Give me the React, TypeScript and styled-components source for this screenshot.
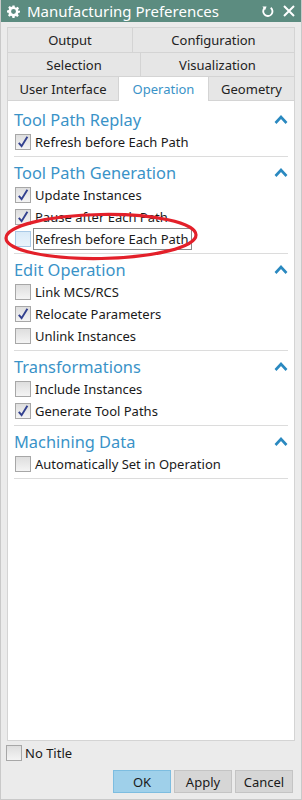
import React from 'react'
import styled, { createGlobalStyle } from 'styled-components'

const GlobalStyle = createGlobalStyle`
  html, body {
    margin: 0;
    padding: 0;
    background: #ebebeb;
  }
  * {
    box-sizing: border-box;
  }
`

const Window = styled.div`
  width: 302px;
  height: 800px;
  display: flex;
  flex-direction: column;
  background: #ebebeb;
  font-family: 'Noto Sans', 'Open Sans', sans-serif;
  color: #1a1a1a;
  border: 1px solid #c9c9c9;
  border-top: none;
  overflow: hidden;
`

const TitleBar = styled.div`
  height: 22px;
  flex: none;
  display: flex;
  align-items: center;
  background: #5c8c80;
  color: #fff;
  padding: 0 7px 0 7px;
  margin: 0 -1px;
`

const TitleText = styled.div`
  flex: 1;
  font-size: 15px;
  line-height: 22px;
  margin-left: 7px;
  white-space: nowrap;
`

const TitleIcons = styled.div`
  display: flex;
  align-items: center;
  gap: 9px;
`

const Tabs = styled.div`
  margin: 5px 6px 0 6px;
  display: flex;
  flex-direction: column;
`

const TabRow = styled.div<{ h: number }>`
  display: flex;
  height: ${({ h }) => h}px;
`

const Tab = styled.div<{ w?: number; active?: boolean }>`
  flex: ${({ w }) => (w ? `0 0 ${w}px` : '1')};
  display: flex;
  align-items: center;
  justify-content: center;
  font-size: 13px;
  color: ${({ active }) => (active ? '#3a93c8' : '#222')};
  background: ${({ active }) => (active ? '#ffffff' : '#e6e6e6')};
  border-top: 1px solid #d4d4d4;
  border-left: 1px solid #d4d4d4;
  &:last-child {
    border-right: 1px solid #d4d4d4;
  }
  ${({ active }) => active && 'position: relative; z-index: 1; margin-bottom: -1px;'}
`

const Panel = styled.div`
  flex: 1;
  margin: 0 6px;
  background: #fff;
  border: 1px solid #d4d4d4;
  padding: 3px 6px 0 6px;
`

const Section = styled.div`
  padding: 3px 0 3px 0;
  border-bottom: 1px solid #dcdcdc;
`

const SectionHead = styled.div`
  height: 24px;
  display: flex;
  align-items: center;
  justify-content: space-between;
  font-size: 16.4px;
  color: #3a93c8;
`

const Row = styled.div`
  height: 22px;
  display: flex;
  align-items: center;
  gap: 3px;
  padding-left: 1px;
  position: relative;
  font-size: 13px;
`

const Box = styled.span<{ hover?: boolean }>`
  width: 16px;
  height: 16px;
  flex: none;
  display: inline-flex;
  align-items: center;
  justify-content: center;
  border: 1px solid ${({ hover }) => (hover ? '#a9c9e6' : '#a7a7a7')};
  background: ${({ hover }) =>
    hover ? 'linear-gradient(#d9eaf8, #eaf4fc)' : 'linear-gradient(#dedede, #f4f4f4)'};
`

const Label = styled.span<{ focus?: boolean }>`
  white-space: nowrap;
  padding: 1px 2px 1px 1px;
  margin-left: -1px;
  border: 1px solid ${({ focus }) => (focus ? '#8a8a8a' : 'transparent')};
`

const Ring = styled.svg`
  position: absolute;
  left: -10px;
  top: -25px;
  pointer-events: none;
`

const Footer = styled.div`
  flex: none;
  display: flex;
  flex-direction: column;
  padding: 3px 8px 6px 5px;
`

const FooterCheck = styled.div`
  display: flex;
  align-items: center;
  gap: 3px;
  font-size: 13px;
  height: 18px;
`

const Buttons = styled.div`
  display: flex;
  justify-content: flex-end;
  gap: 3px;
  margin-top: 8px;
`

const Button = styled.div<{ primary?: boolean }>`
  width: 58px;
  height: 23px;
  display: flex;
  align-items: center;
  justify-content: center;
  font-size: 13px;
  background: ${({ primary }) => (primary ? '#9fd0ea' : '#d6d6d6')};
  border: 1px solid ${({ primary }) => (primary ? '#7dbde0' : '#c4c4c4')};
`

const Check = () => (
  <svg width="12" height="12" viewBox="0 0 12 12">
    <path d="M1.8 6.8 L4.6 10.2 L10.4 0.8" fill="none" stroke="#33418f" strokeWidth="1.9" />
  </svg>
)

const Caret = () => (
  <svg width="14" height="9" viewBox="0 0 14 9">
    <path d="M1.5 8 L7 2 L12.5 8" fill="none" stroke="#2a89c0" strokeWidth="2.6" />
  </svg>
)

const Gear = () => (
  <svg width="13" height="13" viewBox="0 0 24 24">
    <path
      fill="#fff"
      fillRule="evenodd"
      d="M10 1h4l.6 3.1 2.2 1 2.6-1.8 2.8 2.8-1.8 2.6.9 2.2L24 10v4l-3.1.6-.9 2.2 1.8 2.6-2.8 2.8-2.6-1.8-2.2.9L14 24h-4l-.6-3.1-2.2-.9-2.6 1.8-2.8-2.8 1.8-2.6-.9-2.2L0 14v-4l3.1-.6.9-2.2-1.8-2.6 2.8-2.8 2.6 1.8 2.2-.9zM12 7.5a4.5 4.5 0 1 0 0 9 4.5 4.5 0 0 0 0-9z"
    />
  </svg>
)

const Refresh = () => (
  <svg width="13" height="13" viewBox="0 0 14 14">
    <path d="M4 3.2 A5 5 0 1 0 10.5 3" fill="none" stroke="#fff" strokeWidth="2" />
    <path d="M1.5 1.5 L6 1.5 L4.5 5.5 Z" fill="#fff" />
  </svg>
)

const Close = () => (
  <svg width="12" height="12" viewBox="0 0 12 12">
    <path d="M1 1 L11 11 M11 1 L1 11" stroke="#fff" strokeWidth="2" />
  </svg>
)

type Item = { label: string; checked?: boolean; focus?: boolean }

const sections: { title: string; items: Item[] }[] = [
  { title: 'Tool Path Replay', items: [{ label: 'Refresh before Each Path', checked: true }] },
  {
    title: 'Tool Path Generation',
    items: [
      { label: 'Update Instances', checked: true },
      { label: 'Pause after Each Path', checked: true },
      { label: 'Refresh before Each Path', focus: true },
    ],
  },
  {
    title: 'Edit Operation',
    items: [
      { label: 'Link MCS/RCS' },
      { label: 'Relocate Parameters', checked: true },
      { label: 'Unlink Instances' },
    ],
  },
  {
    title: 'Transformations',
    items: [{ label: 'Include Instances' }, { label: 'Generate Tool Paths', checked: true }],
  },
  { title: 'Machining Data', items: [{ label: 'Automatically Set in Operation' }] },
]

const App: React.FC = () => (
  <>
    <GlobalStyle />
    <Window>
      <TitleBar>
        <Gear />
        <TitleText>Manufacturing Preferences</TitleText>
        <TitleIcons>
          <Refresh />
          <Close />
        </TitleIcons>
      </TitleBar>

      <Tabs>
        <TabRow h={25}>
          <Tab w={125}>Output</Tab>
          <Tab>Configuration</Tab>
        </TabRow>
        <TabRow h={24}>
          <Tab w={133}>Selection</Tab>
          <Tab>Visualization</Tab>
        </TabRow>
        <TabRow h={24}>
          <Tab w={111}>User Interface</Tab>
          <Tab w={90} active>
            Operation
          </Tab>
          <Tab>Geometry</Tab>
        </TabRow>
      </Tabs>

      <Panel>
        {sections.map((s) => (
          <Section key={s.title}>
            <SectionHead>
              {s.title}
              <Caret />
            </SectionHead>
            {s.items.map((it) => (
              <Row key={it.label}>
                <Box hover={it.focus}>{it.checked && <Check />}</Box>
                <Label focus={it.focus}>{it.label}</Label>
                {it.focus && (
                  <Ring width="204" height="66" viewBox="0 0 204 66">
                    <ellipse
                      cx="97"
                      cy="33.5"
                      rx="95"
                      ry="22"
                      fill="none"
                      stroke="#e3202a"
                      strokeWidth="3.2"
                      transform="rotate(-1 97 33.5)"
                    />
                  </Ring>
                )}
              </Row>
            ))}
          </Section>
        ))}
      </Panel>

      <Footer>
        <FooterCheck>
          <Box />
          No Title
        </FooterCheck>
        <Buttons>
          <Button primary>OK</Button>
          <Button>Apply</Button>
          <Button>Cancel</Button>
        </Buttons>
      </Footer>
    </Window>
  </>
)

export default App
